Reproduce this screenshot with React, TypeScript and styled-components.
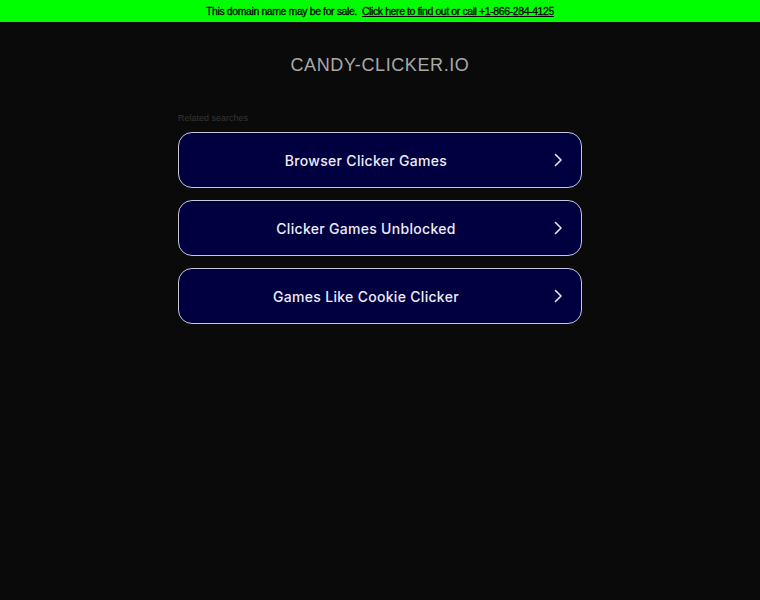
import styled, { createGlobalStyle } from 'styled-components';

const GlobalStyle = createGlobalStyle`
  html, body {
    margin: 0;
    padding: 0;
    background: #0a0a0a;
    font-family: "Liberation Sans", Arial, sans-serif;
  }
`;

const links = ['Browser Clicker Games', 'Clicker Games Unblocked', 'Games Like Cookie Clicker'];

function Chevron() {
  return (
    <svg width="10" height="14" viewBox="0 0 10 14" fill="none">
      <path d="M2.5 1.5L8 7l-5.5 5.5" stroke="#e6e6f5" strokeWidth="1.6" strokeLinecap="round" strokeLinejoin="round" />
    </svg>
  );
}

function App() {
  return (
    <Page>
      <GlobalStyle />
      <SaleBar>
        This domain name may be for sale.&nbsp;&nbsp;<SaleLink href="#">Click here to find out or call +1-866-284-4125</SaleLink>
      </SaleBar>
      <Title>CANDY-CLICKER.IO</Title>
      <Content>
        <Label>Related searches</Label>
        <List>
          {links.map((l) => (
            <SearchButton key={l} href="#">
              <span>{l}</span>
              <Arrow>
                <Chevron />
              </Arrow>
            </SearchButton>
          ))}
        </List>
      </Content>
    </Page>
  );
}

const Page = styled.div`
  min-height: 600px;
  background: #0a0a0a;
`;

const SaleBar = styled.div`
  height: 22px;
  background: #00ff00;
  color: #000;
  font-size: 10.5px;
  letter-spacing: -0.4px;
  line-height: 22px;
  text-align: center;
  -webkit-text-stroke: 0.3px #000;
`;

const SaleLink = styled.a`
  color: #000;
  text-decoration: underline;
`;

const Title = styled.h1`
  margin: 0;
  padding-top: 32px;
  height: 22px;
  line-height: 22px;
  text-align: center;
  color: #a9a9a9;
  font-size: 18px;
  font-weight: normal;
  letter-spacing: 0.6px;
`;

const Content = styled.div`
  width: 404px;
  margin: 0 auto;
  padding-top: 36px;
`;

const Label = styled.div`
  font-size: 9px;
  color: #363636;
  height: 20px;
  line-height: 12px;
`;

const List = styled.div`
  display: flex;
  flex-direction: column;
  gap: 12px;
`;

const SearchButton = styled.a`
  position: relative;
  display: flex;
  align-items: center;
  justify-content: center;
  height: 54px;
  background: #000040;
  border: 1px solid #c8c8dc;
  border-radius: 14px;
  color: #ececf8;
  font-family: Inter, "Noto Sans", sans-serif;
  font-size: 14px;
  font-weight: 500;
  letter-spacing: 0.3px;
  text-decoration: none;
  span {
    margin-left: -28px;
  }
`;

const Arrow = styled.span`
  position: absolute;
  right: 18px;
  top: 20px;
  display: flex;
  margin: 0 !important;
`;

export default App;
